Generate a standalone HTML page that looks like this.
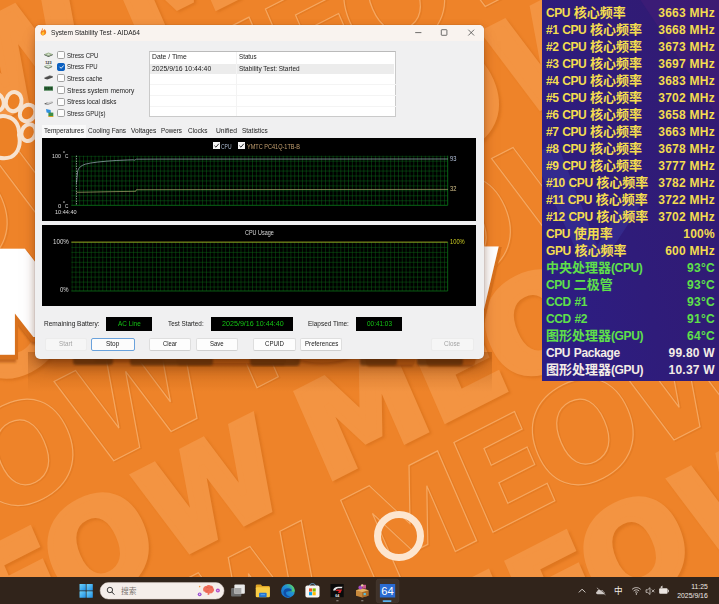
<!DOCTYPE html>
<html><head><meta charset="utf-8"><title>System Stability Test - AIDA64</title>
<style>
*{box-sizing:border-box;margin:0;padding:0}
html,body{width:719px;height:604px;overflow:hidden}
body{position:relative;background:#ee8329;font-family:"Liberation Sans","Noto Sans CJK SC",sans-serif;}
.abs{position:absolute}
#wall{position:absolute;left:0;top:0;width:719px;height:604px}
/* window */
#win{position:absolute;left:35px;top:25px;width:449px;height:334px;background:#f0f0f1;border-radius:5px;box-shadow:0 11px 15px -5px rgba(80,30,0,.55),0 2px 8px rgba(90,35,0,.18),0 0 1px rgba(0,0,0,.4);overflow:hidden;font-size:7.7px;color:#111}
#title{position:absolute;left:0;top:0;width:100%;height:16px;background:#f9f3ef}
#win .t{position:absolute;white-space:nowrap;line-height:10px;transform-origin:0 50%}
.cb{position:absolute;left:22.4px;width:8px;height:8px;border:0.6px solid #a2a2a2;border-radius:1.7px;background:#fdfdfd}
.cb.on{background:#0a5fc0;border-color:#0a5fc0}
.btn{position:absolute;top:313px;height:13px;background:#fdfdfd;border:0.7px solid #dedede;border-bottom-color:#d0d0d0;border-radius:2px;text-align:center;line-height:11.5px;font-size:7.7px}
.fld{position:absolute;top:292px;height:14px;background:#000;color:#12c812;text-align:center;line-height:14px;font-size:7.2px}
.graph{position:absolute;left:7px;width:434px;background:#000}
/* panel */
#panel{position:absolute;left:541.5px;top:0;width:178px;height:380.5px;background:linear-gradient(75deg,#2c1e86 0%,#2f1c7a 45%,#321a70 100%);font-weight:bold;font-size:12px;color:#f3dc50}
#panel .r{position:absolute;left:4.5px;right:4.6px;height:17px;line-height:17px;white-space:nowrap}
#panel .r span{letter-spacing:-0.4px;word-spacing:0.75px}
#panel .r i{font-style:normal;font-size:13px;letter-spacing:0;line-height:10px}
#panel .r b{position:absolute;right:0;top:0;font-weight:bold;letter-spacing:0.25px}
#panel .g{color:#5fe04a}
#panel .w{color:#f3ece6}
/* taskbar */
#tb{position:absolute;left:0;top:576.7px;width:719px;height:28px;background:#31241b}
</style></head><body>
<svg id="wall" viewBox="0 0 719 604">
<defs><filter id="sh" x="-5%" y="-5%" width="110%" height="110%"><feGaussianBlur stdDeviation="1.2"/></filter></defs>
<rect width="719" height="604" fill="#ee8329"/>
<g transform="rotate(-27) skewX(-3.5)" font-family="DejaVu Sans,sans-serif" font-weight="bold" font-size="134">
<g transform="translate(0,0)">
<text x="-881.1 -754.0 -675.9 -565.8 -390.1 -263.0 -184.9 -74.8 100.9 228.0 306.1 416.2 591.9 719.0 797.1 907.2" y="-10" transform="translate(1,1.5)" fill="none" stroke="#db741f" stroke-width="1.6" opacity="0.45">MEOWMEOWMEOWMEOW</text>
<text x="-881.1 -754.0 -675.9 -565.8 -390.1 -263.0 -184.9 -74.8 100.9 228.0 306.1 416.2 591.9 719.0 797.1 907.2" y="-10" fill="none" stroke="#f5a862" stroke-width="1.15">MEOWMEOWMEOWMEOW</text>
</g>
<g transform="translate(0,0)">
<text x="-877.6 -751.5 -672.9 -561.9 -386.6 -260.5 -181.9 -70.9 104.4 230.5 309.1 420.1 595.4 721.5 800.1 911.1" y="105" font-size="127" transform="translate(1.5,2.5)" fill="#d06a18" stroke="#d06a18" stroke-width="6" opacity="0.5" filter="url(#sh)">MEOWMEOWMEOWMEOW</text>
<text x="-877.6 -751.5 -672.9 -561.9 -386.6 -260.5 -181.9 -70.9 104.4 230.5 309.1 420.1 595.4 721.5 800.1 911.1" y="105" font-size="127" fill="#f39442" stroke="#f39442" stroke-width="6" stroke-linejoin="miter" stroke-miterlimit="3">MEOWMEOWMEOWMEOW</text>
</g>
<g transform="translate(0,0)">
<text x="-881.1 -754.0 -675.9 -565.8 -390.1 -263.0 -184.9 -74.8 100.9 228.0 306.1 416.2 591.9 719.0 797.1 907.2" y="226" transform="translate(1,1.5)" fill="none" stroke="#db741f" stroke-width="1.6" opacity="0.45">MEOWMEOWMEOWMEOW</text>
<text x="-881.1 -754.0 -675.9 -565.8 -390.1 -263.0 -184.9 -74.8 100.9 228.0 306.1 416.2 591.9 719.0 797.1 907.2" y="226" fill="none" stroke="#f5a862" stroke-width="1.15">MEOWMEOWMEOWMEOW</text>
</g>
<g transform="translate(8,0)">
<text x="-877.6 -751.5 -672.9 -561.9 -386.6 -260.5 -181.9 -70.9 104.4 230.5 309.1 420.1 595.4 721.5 800.1 911.1" y="341" font-size="127" transform="translate(1.5,2.5)" fill="#d06a18" stroke="#d06a18" stroke-width="6" opacity="0.5" filter="url(#sh)">MEOWMEOWMEOWMEOW</text>
<text x="-877.6 -751.5 -672.9 -561.9 -386.6 -260.5 -181.9 -70.9 104.4 230.5 309.1 420.1 595.4 721.5 800.1 911.1" y="341" font-size="127" fill="#f39442" stroke="#f39442" stroke-width="6" stroke-linejoin="miter" stroke-miterlimit="3">MEOWMEOWMEOWMEOW</text>
</g>
<g transform="translate(-32,0)">
<text x="-881.1 -754.0 -675.9 -565.8 -390.1 -263.0 -184.9 -74.8 100.9 228.0 306.1 416.2 591.9 719.0 797.1 907.2" y="462" transform="translate(1,1.5)" fill="none" stroke="#db741f" stroke-width="1.6" opacity="0.45">MEOWMEOWMEOWMEOW</text>
<text x="-881.1 -754.0 -675.9 -565.8 -390.1 -263.0 -184.9 -74.8 100.9 228.0 306.1 416.2 591.9 719.0 797.1 907.2" y="462" fill="none" stroke="#f5a862" stroke-width="1.15">MEOWMEOWMEOWMEOW</text>
</g>
<g transform="translate(0,0)">
<text x="-877.6 -751.5 -672.9 -561.9 -386.6 -260.5 -181.9 -70.9 104.4 230.5 309.1 420.1 595.4 721.5 800.1 911.1" y="577" font-size="127" transform="translate(1.5,2.5)" fill="#d06a18" stroke="#d06a18" stroke-width="6" opacity="0.5" filter="url(#sh)">MEOWMEOWMEOWMEOW</text>
<text x="-877.6 -751.5 -672.9 -561.9 -386.6 -260.5 -181.9 -70.9 104.4 230.5 309.1 420.1 595.4 721.5 800.1 911.1" y="577" font-size="127" fill="#f39442" stroke="#f39442" stroke-width="6" stroke-linejoin="miter" stroke-miterlimit="3">MEOWMEOWMEOWMEOW</text>
</g>
<g transform="translate(0,0)">
<text x="-881.1 -754.0 -675.9 -565.8 -390.1 -263.0 -184.9 -74.8 100.9 228.0 306.1 416.2 591.9 719.0 797.1 907.2" y="698" transform="translate(1,1.5)" fill="none" stroke="#db741f" stroke-width="1.6" opacity="0.45">MEOWMEOWMEOWMEOW</text>
<text x="-881.1 -754.0 -675.9 -565.8 -390.1 -263.0 -184.9 -74.8 100.9 228.0 306.1 416.2 591.9 719.0 797.1 907.2" y="698" fill="none" stroke="#f5a862" stroke-width="1.15">MEOWMEOWMEOWMEOW</text>
</g>
<g transform="translate(0,0)">
<text x="-877.6 -751.5 -672.9 -561.9 -386.6 -260.5 -181.9 -70.9 104.4 230.5 309.1 420.1 595.4 721.5 800.1 911.1" y="824" font-size="127" transform="translate(1.5,2.5)" fill="#d06a18" stroke="#d06a18" stroke-width="6" opacity="0.5" filter="url(#sh)">MEOWMEOWMEOWMEOW</text>
<text x="-877.6 -751.5 -672.9 -561.9 -386.6 -260.5 -181.9 -70.9 104.4 230.5 309.1 420.1 595.4 721.5 800.1 911.1" y="824" font-size="127" fill="#f39442" stroke="#f39442" stroke-width="6" stroke-linejoin="miter" stroke-miterlimit="3">MEOWMEOWMEOWMEOW</text>
</g>
<g transform="translate(0,0)">
<text x="-881.1 -754.0 -675.9 -565.8 -390.1 -263.0 -184.9 -74.8 100.9 228.0 306.1 416.2 591.9 719.0 797.1 907.2" y="949" transform="translate(1,1.5)" fill="none" stroke="#db741f" stroke-width="1.6" opacity="0.45">MEOWMEOWMEOWMEOW</text>
<text x="-881.1 -754.0 -675.9 -565.8 -390.1 -263.0 -184.9 -74.8 100.9 228.0 306.1 416.2 591.9 719.0 797.1 907.2" y="949" fill="none" stroke="#f5a862" stroke-width="1.15">MEOWMEOWMEOWMEOW</text>
</g>
</g>
<g font-family="DejaVu Sans,sans-serif" font-weight="bold" font-size="126" fill="#b85c14" stroke="#b85c14" stroke-width="22" stroke-linejoin="miter" stroke-miterlimit="2.5" opacity="0.8" filter="url(#sh)"><text vector-effect="non-scaling-stroke" transform="translate(-60.5,355) scale(1.85,1)">M</text><text vector-effect="non-scaling-stroke" transform="translate(176,356) scale(1.25,1)">E</text><text vector-effect="non-scaling-stroke" transform="translate(268,352) scale(1.0,1)">O</text><text vector-effect="non-scaling-stroke" transform="translate(351,356) scale(1.0,1)">W</text></g>
<g font-family="DejaVu Sans,sans-serif" font-weight="bold" font-size="126" fill="#d8711d" stroke="#d8711d" stroke-width="25" stroke-linejoin="miter" stroke-miterlimit="2.5" ><text vector-effect="non-scaling-stroke" transform="translate(-60.5,351) scale(1.85,1)">M</text><text vector-effect="non-scaling-stroke" transform="translate(176,352) scale(1.25,1)">E</text><text vector-effect="non-scaling-stroke" transform="translate(268,348) scale(1.0,1)">O</text><text vector-effect="non-scaling-stroke" transform="translate(351,352) scale(1.0,1)">W</text></g>
<g font-family="DejaVu Sans,sans-serif" font-weight="bold" font-size="126" fill="#fff" stroke="#fff" stroke-width="20" stroke-linejoin="miter" stroke-miterlimit="2.5" ><text vector-effect="non-scaling-stroke" transform="translate(-60.5,348) scale(1.85,1)">M</text><text vector-effect="non-scaling-stroke" transform="translate(176,349) scale(1.25,1)">E</text><text vector-effect="non-scaling-stroke" transform="translate(268,345) scale(1.0,1)">O</text><text vector-effect="non-scaling-stroke" transform="translate(351,349) scale(1.0,1)">W</text></g>
<defs><linearGradient id="ws" x1="0" y1="0" x2="0" y2="1"><stop offset="0" stop-color="#8a3c00" stop-opacity="0.340"/><stop offset="1" stop-color="#8a3c00" stop-opacity="0"/></linearGradient></defs><rect x="28" y="352" width="464" height="40" fill="url(#ws)"/>
<g fill="#57300c" opacity="0.750" filter="url(#sh)"><rect x="73" y="355" width="40" height="10" rx="3"/><rect x="130" y="355" width="83" height="10.500" rx="3"/><rect x="250" y="355" width="50" height="11" rx="4"/><rect x="360" y="355" width="37" height="10.500" rx="3"/><rect x="417" y="355" width="46" height="10.500" rx="3"/></g>
<g fill="#ec8126" stroke="#f7e3d0" stroke-width="4"><ellipse cx="-3.500" cy="102" rx="7" ry="8.800" transform="rotate(-20 -3.500 102)"/><ellipse cx="13.700" cy="101.600" rx="7.800" ry="9.600" transform="rotate(12 13.700 101.600)"/><ellipse cx="27.600" cy="113" rx="7.400" ry="8.600" transform="rotate(35 27.600 113)"/><ellipse cx="28.600" cy="132.600" rx="7" ry="8.600" transform="rotate(20 28.600 132.600)"/><path d="M-12 128c2-9 12-14 20-11 8 2 12 10 11 18 2 8 0 18-8 22-8 3-16 0-22-4z"/></g>
<circle cx="399" cy="536" r="21.500" fill="none" stroke="#fde6cf" stroke-width="7"/>
</svg>
<div id="win">
<div id="title"></div>
<svg class="abs" style="left:5.200px;top:2.300px" width="7.200" height="9.200" viewBox="0 0 8 10"><path d="M2.2 0.6 C3.6 2 3.2 3.2 2.4 4.2 C3.6 4.2 4.6 3.2 4.8 2.2 C6.6 3.6 7.4 5.2 6.6 7.2 C5.8 9 3.8 9.6 2.2 9 C0.6 8.3 0.2 6.4 1 4.8 C1.6 3.6 2.6 2.6 2.2 0.6Z" fill="#f4811f"/><path d="M3.6 5 C4.8 5.8 5.2 7 4.6 8 C4 9 2.6 9 2 8.2 C1.5 7.4 2 6.4 2.6 6 C3.1 5.7 3.5 5.5 3.6 5Z" fill="#ffc42e"/></svg>
<div class="t" style="left:15.6px;top:2.6px;font-size:7.9px;transform:scaleX(0.835);color:#222;">System Stability Test - AIDA64</div>
<svg class="abs" style="left:375px;top:0" width="74" height="16" viewBox="0 0 74 16"><g fill="none" stroke="#333" stroke-width="0.7"><path d="M5.2 7.6H11.4"/><rect x="31.3" y="4.7" width="5.6" height="5.6" rx="0.6"/><path d="M58.3 4.7L64.1 10.5M64.1 4.7L58.3 10.5"/></g></svg>
<svg class="abs" style="left:8px;top:24px" width="12" height="70" viewBox="43 49 12 70"><path d="M44.100 54.300L48.500 52.400L52.900 54.200L48.500 56.200Z" fill="#9db48e"/><path d="M46.600 54.300L48.500 53.500L50.400 54.300L48.500 55.100Z" fill="#dfe8d8"/><path d="M44.100 54.300L48.500 56.200L52.900 54.200V55L48.500 57.100L44.100 55.100Z" fill="#3e4c3e"/><text x="48.400" y="64.200" font-size="3.800" text-anchor="middle" fill="#2a2a2a" font-family="Liberation Sans,sans-serif" font-weight="bold">123</text><path d="M44.500 66.400L48.300 65L52.100 66.300L48.300 67.900Z" fill="#dfe8d8" stroke="#6f8a63" stroke-width="0.500"/><path d="M44.500 66.800L48.300 68.400L52.100 66.700" fill="none" stroke="#3e4c3e" stroke-width="0.600"/><path d="M44.400 77.800L49.600 75.600L52.900 76.300L52.700 77.500L47.400 79.400L44.500 78.700Z" fill="#4c4c4c"/><path d="M44.600 77.600L49.600 75.700L52.600 76.400" fill="none" stroke="#9a9a9a" stroke-width="0.400"/><rect x="44.100" y="86.400" width="8.800" height="4.600" fill="#2f6f3d"/><rect x="44.100" y="90.200" width="8.800" height="0.800" fill="#86a98c"/><path d="M45.200 87.200V89.600M46.800 87.200V89.600M48.400 87.200V89.600M50 87.200V89.600M51.600 87.200V89.600" stroke="#16331c" stroke-width="0.800"/><path d="M44.700 103.400L47.600 102.300L47.600 104.300L44.700 104.300Z" fill="#4a4a4a"/><path d="M47.200 102.500L52.300 101L52.900 102.400L48 104.400L45.200 104.400Z" fill="#cfcfcf"/><path d="M44.700 103.500L48 104.500L52.900 102.500" fill="none" stroke="#5a5a5a" stroke-width="0.500"/><path d="M46 109L50.600 110L50.900 113.400L46.600 112.600Z" fill="#2f8fe0"/><rect x="48.400" y="112.600" width="4.900" height="3.600" fill="#3f8f46"/><rect x="48.400" y="116" width="4.900" height="1" fill="#d8a227"/></svg>
<div class="cb" style="top:26.3px"></div>
<div class="t" style="left:32.3px;top:25.8px;font-size:7.7px;transform:scaleX(0.783);color:#222;">Stress CPU</div>
<div class="cb on" style="top:37.8px"><svg viewBox="0 0 8 8" width="8" height="8" style="position:absolute;left:-0.600px;top:-0.600px"><path d="M1.6 3.8L3.1 5.3L5.8 2.4" fill="none" stroke="#fff" stroke-width="0.9"/></svg></div>
<div class="t" style="left:32.3px;top:37.4px;font-size:7.7px;transform:scaleX(0.780);color:#222;">Stress FPU</div>
<div class="cb" style="top:49.4px"></div>
<div class="t" style="left:32.3px;top:49.0px;font-size:7.7px;transform:scaleX(0.798);color:#222;">Stress cache</div>
<div class="cb" style="top:61.0px"></div>
<div class="t" style="left:32.3px;top:60.5px;font-size:7.7px;transform:scaleX(0.861);color:#222;">Stress system memory</div>
<div class="cb" style="top:72.5px"></div>
<div class="t" style="left:32.3px;top:72.0px;font-size:7.7px;transform:scaleX(0.831);color:#222;">Stress local disks</div>
<div class="cb" style="top:84.0px"></div>
<div class="t" style="left:32.3px;top:83.6px;font-size:7.7px;transform:scaleX(0.776);color:#222;">Stress GPU(s)</div>
<div class="abs" style="left:114.3px;top:25.8px;width:247px;height:66px;background:#fff;border:0.7px solid #cacaca;border-top-color:#bababa"></div>
<div class="abs" style="left:115px;top:38.5px;width:244px;height:10px;background:#ececec"></div>
<div class="abs" style="left:115px;top:59.0px;width:245.6px;height:0.7px;background:#f4f4f4"></div>
<div class="abs" style="left:115px;top:70.2px;width:245.6px;height:0.7px;background:#f4f4f4"></div>
<div class="abs" style="left:115px;top:81.4px;width:245.6px;height:0.7px;background:#f4f4f4"></div>
<div class="abs" style="left:201.3px;top:26.5px;width:0.7px;height:64.6px;background:#f3f3f3"></div>
<div class="t" style="left:117.0px;top:27.2px;font-size:7.7px;transform:scaleX(0.884);color:#222;">Date / Time</div>
<div class="t" style="left:204.3px;top:27.2px;font-size:7.7px;transform:scaleX(0.811);color:#222;">Status</div>
<div class="t" style="left:117.0px;top:38.6px;font-size:7.7px;transform:scaleX(0.894);color:#222;">2025/9/16 10:44:40</div>
<div class="t" style="left:204.3px;top:38.6px;font-size:7.7px;transform:scaleX(0.841);color:#222;">Stability Test: Started</div>
<div class="abs" style="left:7.2px;top:100px;width:44px;height:12.5px;background:#f9f9f9"></div>
<div class="t" style="left:9.0px;top:100.7px;font-size:7.7px;transform:scaleX(0.850);color:#222;">Temperatures</div>
<div class="t" style="left:53.3px;top:101.2px;font-size:7.7px;transform:scaleX(0.838);color:#222;">Cooling Fans</div>
<div class="t" style="left:96.0px;top:101.2px;font-size:7.7px;transform:scaleX(0.856);color:#222;">Voltages</div>
<div class="t" style="left:126.3px;top:101.2px;font-size:7.7px;transform:scaleX(0.818);color:#222;">Powers</div>
<div class="t" style="left:153.3px;top:101.2px;font-size:7.7px;transform:scaleX(0.840);color:#222;">Clocks</div>
<div class="t" style="left:180.7px;top:101.2px;font-size:7.7px;transform:scaleX(0.876);color:#222;">Unified</div>
<div class="t" style="left:207.3px;top:101.2px;font-size:7.7px;transform:scaleX(0.834);color:#222;">Statistics</div>
<svg class="graph" style="top:112.5px;height:83.3px" width="434" height="83.3" viewBox="42 137.5 434 83.3"><defs><pattern id="g1" x="29.30" y="155.2" width="3.84" height="4.95" patternUnits="userSpaceOnUse"><path d="M0 0H3.84M0 0V4.95" stroke="#097319" stroke-width="0.85" fill="none"/></pattern></defs><rect x="71.3" y="155.2" width="376.4" height="49.6" fill="url(#g1)"/><path d="M71.3 204.8H447.7M447.7 155.2V204.8" stroke="#097319" stroke-width="0.85"/><path d="M76.5 155.2V204.8" stroke="#d4d4d4" stroke-width="0.7" stroke-dasharray="1.2 1.3"/><g transform="translate(0.2,0.4)"><path d="M76.3 191.4L90 191.2L110 190.8L135.5 190.4L136.2 188.8L200 188.7L447.7 188.5" fill="none" stroke="#a8a66c" stroke-width="0.7"/><path d="M76.3 181.8L76.9 176L77.5 170L78.6 167.5L80 166L82 164.6L85 163.3L90 162.2L97 161.2L106 160.3L116 159.6L127 159.1L133 158.9L134 159.3L135 158.9L136 158.3L160 158.2L447.7 158.1" fill="none" stroke="#9fb0bb" stroke-width="0.7"/></g></svg>
<svg class="abs" style="left:177.5px;top:117.2px" width="7.1" height="7.1" viewBox="0 0 6 6"><rect width="6" height="6" fill="#f4f4f4"/><path d="M1.2 3.1L2.5 4.4L4.9 1.5" fill="none" stroke="#222" stroke-width="0.8"/></svg>
<div class="t" style="left:186.2px;top:116.7px;font-size:6.4px;transform:scaleX(0.777);color:#aab8cc;">CPU</div>
<svg class="abs" style="left:203.3px;top:117.2px" width="7.1" height="7.1" viewBox="0 0 6 6"><rect width="6" height="6" fill="#f4f4f4"/><path d="M1.2 3.1L2.5 4.4L4.9 1.5" fill="none" stroke="#222" stroke-width="0.8"/></svg>
<div class="t" style="left:212.2px;top:116.7px;font-size:6.4px;transform:scaleX(0.868);color:#c4a070;">YMTC PC41Q-1TB-B</div>
<div class="t" style="left:17.2px;top:125.9px;font-size:6.2px;transform:scaleX(0.860);color:#dcdcdc;">100</div>
<div class="t" style="left:27.5px;top:121.6px;font-size:3.8px;transform:scaleX(0.899);color:#dcdcdc;">o</div>
<div class="t" style="left:30.0px;top:125.9px;font-size:6.2px;transform:scaleX(0.759);color:#dcdcdc;">C</div>
<div class="t" style="left:23.2px;top:175.9px;font-size:6.2px;transform:scaleX(0.957);color:#dcdcdc;">0</div>
<div class="t" style="left:27.5px;top:171.7px;font-size:3.8px;transform:scaleX(0.899);color:#dcdcdc;">o</div>
<div class="t" style="left:30.0px;top:175.9px;font-size:6.2px;transform:scaleX(0.759);color:#dcdcdc;">C</div>
<div class="t" style="left:19.5px;top:181.8px;font-size:6.2px;transform:scaleX(0.899);color:#dcdcdc;">10:44:40</div>
<div class="t" style="left:414.6px;top:128.5px;font-size:6.4px;transform:scaleX(0.899);color:#b5c3dc;">93</div>
<div class="t" style="left:414.6px;top:159.3px;font-size:6.4px;transform:scaleX(0.899);color:#d8c48c;">32</div>
<svg class="graph" style="top:199.5px;height:81.2px" width="434" height="81.2" viewBox="42 224.5 434 81.2"><defs><pattern id="g2" x="29.30" y="241.5" width="3.84" height="4.95" patternUnits="userSpaceOnUse"><path d="M0 0H3.84M0 0V4.95" stroke="#0a6414" stroke-width="0.9" fill="none"/></pattern></defs><rect x="71.3" y="241.5" width="376.4" height="49" fill="url(#g2)"/><path d="M71.3 290.5H447.7M447.7 241.5V290.5" stroke="#0a6414" stroke-width="0.9"/><path d="M71.3 241.6H447.7" stroke="#a8a822" stroke-width="0.9"/></svg>
<div class="t" style="left:209.5px;top:203.3px;font-size:6.4px;transform:scaleX(0.852);color:#d6d6d6;">CPU Usage</div>
<div class="t" style="left:17.5px;top:211.9px;font-size:6.4px;transform:scaleX(0.971);color:#dcdcdc;">100%</div>
<div class="t" style="left:24.8px;top:260.0px;font-size:6.4px;transform:scaleX(0.930);color:#dcdcdc;">0%</div>
<div class="t" style="left:414.6px;top:211.8px;font-size:6.4px;transform:scaleX(0.898);color:#cccc22;">100%</div>
<div class="t" style="left:9.3px;top:294.0px;font-size:7.7px;transform:scaleX(0.851);color:#222;">Remaining Battery:</div>
<div class="t" style="left:133.3px;top:294.0px;font-size:7.7px;transform:scaleX(0.826);color:#222;">Test Started:</div>
<div class="t" style="left:273.3px;top:294.0px;font-size:7.7px;transform:scaleX(0.840);color:#222;">Elapsed Time:</div>
<div class="fld" style="left:71.3px;width:46.2px"></div>
<div class="t" style="left:83.3px;top:293.7px;font-size:7.5px;transform:scaleX(0.851);color:#14c414;">AC Line</div>
<div class="fld" style="left:176.0px;width:81.5px"></div>
<div class="t" style="left:186.7px;top:293.7px;font-size:7.5px;transform:scaleX(0.953);color:#14c414;">2025/9/16 10:44:40</div>
<div class="fld" style="left:320.7px;width:46.8px"></div>
<div class="t" style="left:331.7px;top:293.7px;font-size:7.5px;transform:scaleX(0.856);color:#14c414;">00:41:03</div>
<div class="btn" style="left:9.7px;width:42.0px;background:#f6f6f6;border-color:#ececec"></div>
<div class="t" style="left:24.0px;top:314.2px;font-size:7.7px;transform:scaleX(0.818);color:#a3a3a3;">Start</div>
<div class="btn" style="left:55.8px;width:44.2px;border-color:#6aa2dc;border-width:0.9px;background:#fcfcfc;top:312.6px;height:13.4px"></div>
<div class="t" style="left:70.7px;top:314.2px;font-size:7.7px;transform:scaleX(0.840);color:#1c1c1c;">Stop</div>
<div class="btn" style="left:114.2px;width:41.8px;"></div>
<div class="t" style="left:128.3px;top:314.2px;font-size:7.7px;transform:scaleX(0.761);color:#1c1c1c;">Clear</div>
<div class="btn" style="left:161.0px;width:41.7px;"></div>
<div class="t" style="left:175.0px;top:314.2px;font-size:7.7px;transform:scaleX(0.781);color:#1c1c1c;">Save</div>
<div class="btn" style="left:218.3px;width:42.7px;"></div>
<div class="t" style="left:230.0px;top:314.2px;font-size:7.7px;transform:scaleX(0.793);color:#1c1c1c;">CPUID</div>
<div class="btn" style="left:265.3px;width:42.2px;"></div>
<div class="t" style="left:270.0px;top:314.2px;font-size:7.7px;transform:scaleX(0.802);color:#1c1c1c;">Preferences</div>
<div class="btn" style="left:396.0px;width:42.5px;background:#f6f6f6;border-color:#ececec"></div>
<div class="t" style="left:409.0px;top:314.2px;font-size:7.7px;transform:scaleX(0.813);color:#a3a3a3;">Close</div>
</div>
<div id="panel">
<svg class="abs" style="left:0;top:0" width="178" height="380" viewBox="541.5 0 178 380"><g fill="#4f6fe0" opacity="0.16"><path d="M541.500 150L557 144L603 262L584 268L541.500 176Z"/><path d="M584 268L603 262L640 205L626 196Z"/></g><path d="M640 0H719.500V120Z" fill="#5a1f7a" opacity="0.250"/></svg>
<div class="r" style="top:5.40px"><span>CPU <i>核心频率</i></span><b>3663 MHz</b></div>
<div class="r" style="top:22.40px"><span>#1 CPU <i>核心频率</i></span><b>3668 MHz</b></div>
<div class="r" style="top:39.40px"><span>#2 CPU <i>核心频率</i></span><b>3673 MHz</b></div>
<div class="r" style="top:56.40px"><span>#3 CPU <i>核心频率</i></span><b>3697 MHz</b></div>
<div class="r" style="top:73.40px"><span>#4 CPU <i>核心频率</i></span><b>3683 MHz</b></div>
<div class="r" style="top:90.40px"><span>#5 CPU <i>核心频率</i></span><b>3702 MHz</b></div>
<div class="r" style="top:107.40px"><span>#6 CPU <i>核心频率</i></span><b>3658 MHz</b></div>
<div class="r" style="top:124.40px"><span>#7 CPU <i>核心频率</i></span><b>3663 MHz</b></div>
<div class="r" style="top:141.40px"><span>#8 CPU <i>核心频率</i></span><b>3678 MHz</b></div>
<div class="r" style="top:158.40px"><span>#9 CPU <i>核心频率</i></span><b>3777 MHz</b></div>
<div class="r" style="top:175.40px"><span>#10 CPU <i>核心频率</i></span><b>3782 MHz</b></div>
<div class="r" style="top:192.40px"><span>#11 CPU <i>核心频率</i></span><b>3722 MHz</b></div>
<div class="r" style="top:209.40px"><span>#12 CPU <i>核心频率</i></span><b>3702 MHz</b></div>
<div class="r" style="top:226.40px"><span>CPU <i>使用率</i></span><b>100%</b></div>
<div class="r" style="top:243.40px"><span>GPU <i>核心频率</i></span><b>600 MHz</b></div>
<div class="r g" style="top:260.40px"><span><i>中央处理器</i>(CPU)</span><b>93°C</b></div>
<div class="r g" style="top:277.40px"><span>CPU <i>二极管</i></span><b>93°C</b></div>
<div class="r g" style="top:294.40px"><span>CCD #1</span><b>93°C</b></div>
<div class="r g" style="top:311.40px"><span>CCD #2</span><b>91°C</b></div>
<div class="r g" style="top:328.40px"><span><i>图形处理器</i>(GPU)</span><b>64°C</b></div>
<div class="r w" style="top:345.40px"><span>CPU Package</span><b>99.80 W</b></div>
<div class="r w" style="top:362.40px"><span><i>图形处理器</i>(GPU)</span><b>10.37 W</b></div>
</div>
<div id="tb">
<svg class="abs" style="left:0;top:-0.7px" width="719" height="28.7" viewBox="0 576 719 28.7" font-family="Liberation Sans,Noto Sans CJK SC,sans-serif">
<defs><linearGradient id="wl" x1="0" y1="0" x2="1" y2="1"><stop offset="0" stop-color="#6fd3fa"/><stop offset="1" stop-color="#1f8fe6"/></linearGradient><linearGradient id="eg" x1="0" y1="1" x2="1" y2="0"><stop offset="0" stop-color="#1565c8"/><stop offset="0.55" stop-color="#1f8fd8"/><stop offset="1" stop-color="#5fd06a"/></linearGradient></defs>
<rect x="79.4" y="584" width="6.3" height="6.5" rx="0.5" fill="url(#wl)"/>
<rect x="86.4" y="584" width="6.3" height="6.5" rx="0.5" fill="url(#wl)"/>
<rect x="79.4" y="591.2" width="6.3" height="6.5" rx="0.5" fill="url(#wl)"/>
<rect x="86.4" y="591.2" width="6.3" height="6.5" rx="0.5" fill="url(#wl)"/>
<rect x="100" y="582.6" width="124" height="16.5" rx="8.25" fill="#f5eeea" stroke="#d8cdc6" stroke-width="0.5"/>
<circle cx="109.8" cy="590" r="2.7" fill="none" stroke="#2a2a2a" stroke-width="0.9"/><path d="M111.8 592.1L114 594.4" stroke="#2a2a2a" stroke-width="1" stroke-linecap="round"/>
<text x="121" y="593.6" font-size="7.7" fill="#7b7571">搜索</text>
<g><path d="M203.2 590.2c-.6-2.2 1-4.2 3.2-4.2.8-1 2.6-1.2 3.6-.4 1.8-.3 3.3 1 3.3 2.7 1.1.9 1 2.9-.4 3.7-.5 1.3-2.1 1.8-3.2 1.1l-.7 1.9-1.7-.5.4-1.6c-1.4.5-2.9-.1-3.3-1.3-.9-.1-1.4-.7-1.2-1.4z" fill="#f0705c"/><path d="M206 588c1-.8 2.300-.6 2.800.3M209.600 587.300c1-.5 2.200 0 2.500 1M205.500 590.800c1 .6 2.400.4 3-.5" stroke="#d2503f" stroke-width="0.500" fill="none"/><circle cx="199.600" cy="594.300" r="1.900" fill="#9a4fd0"/><circle cx="199.600" cy="594.300" r="0.700" fill="#f4d2f6"/><circle cx="217.800" cy="590.600" r="2" fill="#b04fc8"/><circle cx="217.800" cy="590.600" r="0.700" fill="#f6d6f2"/><circle cx="199.600" cy="586.600" r="0.800" fill="#f39a3c"/></g>
<rect x="231" y="588" width="10.3" height="8.4" rx="1" fill="#6b6b6b"/><rect x="234.300" y="584.600" width="10.500" height="9.200" rx="1" fill="#e9e9e9"/><rect x="234.300" y="588" width="7" height="5.800" fill="#a9a9a9"/>
<path d="M255.700 586c0-.8.600-1.400 1.400-1.400h3.600l1.500 1.500h6.300c.8 0 1.400.6 1.400 1.400v1h-14.200z" fill="#e0a526"/><rect x="255.700" y="587.200" width="14.200" height="10" rx="1.200" fill="#f9cd45"/><rect x="259" y="592.800" width="7.600" height="4.400" rx="0.800" fill="#2474cf"/><rect x="260.600" y="594.200" width="4.400" height="1" fill="#5aa6ee"/>
<circle cx="287.900" cy="591" r="6.900" fill="url(#eg)"/><path d="M283.800 594.300c-1.200-3.200.9-6 4.100-6 2.600 0 4.300 1.500 4.500 3.200h-4.700c-1.100 0-1.900.9-1.700 2.100.3 1.500 1.800 2.700 4.300 2.700-2.300 1.300-5.300.7-6.500-2z" fill="#0f4fa8"/><path d="M287.700 591.500h6.900c.3-3.600-2.700-6.700-6.500-7.200 3 .9 4.500 3 4.300 5.300-.1.900-.9 1.300-1.900 1.300z" fill="#54cf6e" opacity=".9"/>
<path d="M309.300 586.200c0-3.400 6.300-3.400 6.300 0" fill="none" stroke="#6fb6ec" stroke-width="0.900"/><rect x="305.400" y="585.600" width="14.100" height="11.900" rx="1.800" fill="#f7f5f3"/><rect x="309" y="588.400" width="3.100" height="3.200" fill="#f25022"/><rect x="312.600" y="588.400" width="3.100" height="3.200" fill="#7fba00"/><rect x="309" y="592.100" width="3.100" height="3.200" fill="#00a4ef"/><rect x="312.600" y="592.100" width="3.100" height="3.200" fill="#ffb900"/>
<rect x="330.500" y="584" width="13.200" height="13.200" fill="#0a0a0a"/><path d="M333 590.600c.3-2.500 2.600-3.900 5.200-3.900h4.300l-.6 1.500h-3.600c-1.500 0-2.700 1-2.900 2.400z" fill="#e8e8e8"/><path d="M336.500 589.400h5.600l-1.700 3.500h-2.400l.9-2h-3z" fill="#d8232a"/><text x="337.200" y="596.600" font-size="3.600" font-weight="bold" fill="#eee" text-anchor="middle">64</text><rect x="336.200" y="600.200" width="2.400" height="1" rx="0.500" fill="#9c948e"/>
<path d="M356 590.200l6.200-1.600 6.200 1.600v5.600l-6.200 1.800-6.200-1.800z" fill="#c8893c"/><path d="M362.200 591.900l6.200-1.700v5.600l-6.200 1.800z" fill="#a86a28"/><path d="M356 590.200l6.200 1.700 6.200-1.700-6.200-1.600z" fill="#e4b56a"/><circle cx="360.400" cy="587.400" r="2" fill="#a24bc4"/><rect x="362.400" y="584.800" width="3.600" height="3.800" fill="#c9578e"/><circle cx="362.200" cy="585.400" r="1.200" fill="#e9d3a0"/><rect x="363.600" y="593" width="2.200" height="2.200" fill="#54c2e6"/><rect x="361.100" y="600.200" width="2.400" height="1" rx="0.500" fill="#9c948e"/>
<rect x="376.300" y="579.200" width="22.600" height="23.600" rx="2.400" fill="#3f322a" stroke="#4e4139" stroke-width="0.500"/><rect x="379.900" y="584" width="15.300" height="13.500" fill="#2a6bd2"/><text x="387.600" y="594.600" font-size="10.400" fill="#fff" text-anchor="middle" textLength="12.500" lengthAdjust="spacingAndGlyphs">64</text><rect x="382.600" y="600.300" width="9" height="1.600" rx="0.800" fill="#5ab4f2"/>
<path d="M579 592.400l3.200-3.200 3.200 3.200" fill="none" stroke="#ece6e2" stroke-width="0.900"/>
<path d="M597.600 594.300c-1.500 0-2-2.300-.3-2.700.1-1.600 2-2.400 3.100-1.300 1.300-.9 3.100-.1 3.200 1.500 1.700.1 1.900 2.500.2 2.500z" fill="#cfc9c5"/><path d="M597 587.800l8.600 7" stroke="#cfc9c5" stroke-width="0.800"/><path d="M597.400 587.300l8.600 7" stroke="#31241b" stroke-width="0.600"/>
<text x="614.100" y="594.400" font-size="8.600" fill="#f1ece8">中</text>
<g fill="none" stroke="#ece6e2" stroke-width="0.800"><path d="M632.200 589.400c2.500-2.400 6.100-2.400 8.600 0"/><path d="M633.700 591c1.700-1.600 3.900-1.600 5.600 0"/><path d="M635.100 592.500c.9-.8 1.900-.8 2.800 0"/></g><circle cx="636.500" cy="594" r="0.700" fill="#ece6e2"/>
<path d="M646.200 589.800h1.600l2.300-2.100v6.800l-2.300-2.100h-1.600z" fill="none" stroke="#ece6e2" stroke-width="0.700"/><path d="M651.800 589.500l2.800 2.800M654.600 589.500l-2.800 2.800" stroke="#ece6e2" stroke-width="0.700"/>
<rect x="659.300" y="588.200" width="8.400" height="5.600" rx="1" fill="#ece6e2"/><rect x="667.900" y="589.800" width="1" height="2.400" fill="#ece6e2"/><path d="M660.300 587.200l2.300-1.600v2.600z" fill="#ece6e2"/>
<text x="707.900" y="589" font-size="6.800" fill="#f1ece8" text-anchor="end">11:25</text><text x="707.900" y="598" font-size="6.800" fill="#f1ece8" text-anchor="end" textLength="30.500" lengthAdjust="spacingAndGlyphs">2025/9/16</text>
</svg>
</div>
</body></html>
